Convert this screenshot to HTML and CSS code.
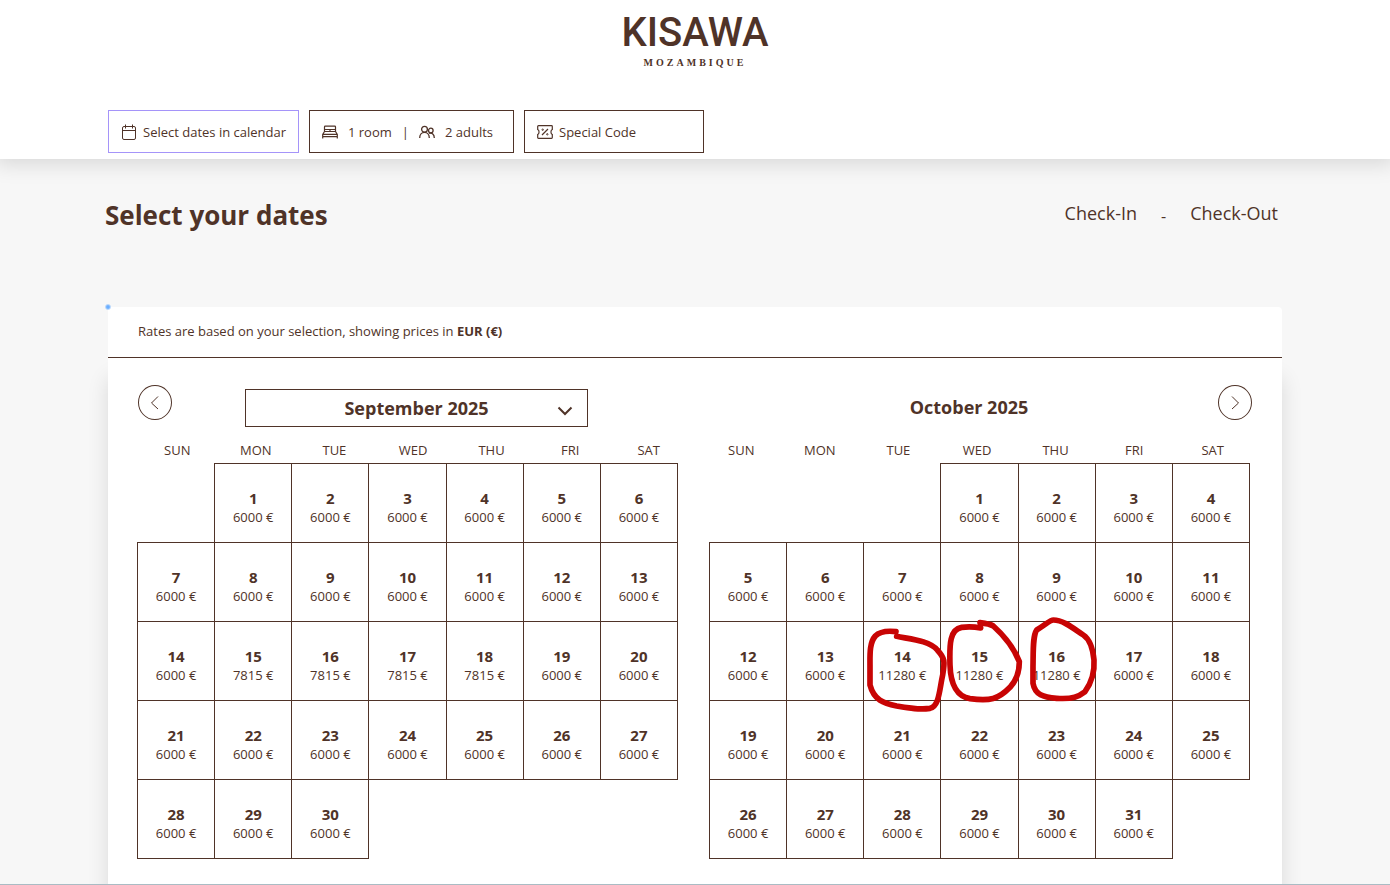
FILE: index.html
```html
<!DOCTYPE html>
<html lang="en">
<head>
<meta charset="utf-8">
<meta name="viewport" content="width=device-width, initial-scale=1">
<title>Kisawa Mozambique – Select your dates</title>
<link rel="stylesheet" href="styles.css">
</head>
<body>
<header class="site-header">
  <a class="logo" href="#"><span class="logo-name">KISAWA</span><span class="logo-place">MOZAMBIQUE</span></a>
  <div class="search-bar">
    <button type="button" class="field field-dates">
      <svg class="icon" width="16" height="16" viewBox="0 0 16 16"><rect x="1.5" y="2.5" width="13" height="13" rx="1.5"/><path d="M1.5 6.5h13M4.5 .5v4M11.5 .5v4"/></svg>
      <span>Select dates in calendar</span>
    </button>
    <button type="button" class="field field-guests">
      <svg class="icon" width="16" height="14" viewBox="0 0 16 14"><path d="M2.500 7V2q0-.8.8-.8h9.400q.8 0 .8.800V7M.7 13.500V9.500L2.500 6.500h11l1.800 3v4M.7 9.400h14.600M.7 11.600h14.600M2.500 4.500h11M8 4.500v2" stroke-width="1.200"/></svg>
      <span>1 room</span>
      <span class="divider">|</span>
      <svg class="icon" width="16" height="14" viewBox="0 0 16 14"><g stroke-width="1.300"><circle cx="5.500" cy="4.300" r="2.900"/><path d="M.7 13c0-3.300 2-5.600 4.800-5.600S10.300 9.700 10.300 13"/><circle cx="11.800" cy="5.500" r="2.300"/><path d="M10.200 8.500c2.800-1 5.100.7 5.100 4.500"/></g></svg>
      <span>2 adults</span>
    </button>
    <button type="button" class="field field-code">
      <svg class="icon" width="16" height="14" viewBox="0 0 16 14"><path d="M1.500 .7h13q.8 0 .8.800V4.500c-1.800.6-1.800 4.400 0 5V12.500q0 .8-.8.800h-13q-.8 0-.8-.8V9.500c1.800-.6 1.800-4.400 0-5V1.500q0-.8.8-.8zM5 10l6-6" stroke-width="1.200"/><circle cx="5.700" cy="4.700" r=".7"/><circle cx="10.300" cy="9.300" r=".7"/></svg>
      <span>Special Code</span>
    </button>
  </div>
</header>

<main class="page">
  <div class="title-row">
    <h1>Select your dates</h1>
    <div class="stay"><span>Check-In</span><span class="stay-dash">-</span><span>Check-Out</span></div>
  </div>

  <section class="card">
    <p class="rates-note">Rates are based on your selection, showing prices in <strong>EUR (€)</strong></p>
    <div class="months">
      <section class="month month-first">
        <div class="month-head">
          <button type="button" class="nav" aria-label="Previous month"><svg width="34" height="35" viewBox="0 0 34 35"><path d="M20 11.500l-6.500 6.500 6.500 6"/></svg></button>
          <div class="month-select">
            <select aria-label="Month"><option>September 2025</option><option>October 2025</option></select>
            <svg class="chevron" width="16" height="10" viewBox="0 0 16 10"><path d="M1.500 1.500L8 8l6.500-6.500"/></svg>
          </div>
        </div>
        <table class="calendar" data-start="1" data-days="30" data-high="15,16,17,18" data-price="7815" aria-label="September 2025"></table>
      </section>
      <section class="month month-second">
        <div class="month-head">
          <h2>October 2025</h2>
          <button type="button" class="nav" aria-label="Next month"><svg width="34" height="35" viewBox="0 0 34 35"><path d="M14 11.500l6.500 6.500-6.500 6"/></svg></button>
        </div>
        <div class="marked">
          <table class="calendar" data-start="3" data-days="31" data-high="14,15,16" data-price="11280" aria-label="October 2025"></table>
          <svg class="marks" viewBox="0 0 1623 1188" preserveAspectRatio="none" aria-hidden="true">
            <g transform="translate(423 411)">
              <path d="M138 95C112 92 90 94 76 108C58 128 60 165 60 195V255C72 300 100 310 140 318C180 325 210 330 240 325C268 318 268 270 278 225C285 185 285 175 262 150C238 122 185 118 140 109"/>
              <path d="M392 84C372 80 352 80 335 82C300 88 298 130 300 195C302 260 325 290 360 296C420 304 445 298 480 262C500 240 508 215 508 185C490 140 460 105 430 78C420 72 405 70 390 68"/>
              <path d="M610 60C600 60 590 72 560 90C548 108 550 150 549 200V250C555 285 580 292 620 295C670 298 685 290 705 275C730 240 734 210 732 180C728 140 715 115 700 105C670 85 640 60 610 60Z"/>
            </g>
          </svg>
        </div>
      </section>
    </div>
    <span class="focus-dot"></span>
  </section>
</main>
<script src="calendar.js"></script>
</body>
</html>
```
FILE: styles.css
```css
* { box-sizing: border-box; }

:root {
  --brown: #4f3328;
  --page: #f7f7f7;
}

body {
  margin: 0;
  min-height: 100vh;
  display: flex;
  flex-direction: column;
  background: var(--page);
  color: var(--brown);
  font-family: "Open Sans", "Noto Sans", sans-serif;
  font-size: 13px;
}

button, select { font: inherit; color: inherit; cursor: pointer; }

svg { flex: none; fill: none; stroke: var(--brown); }

.site-header {
  position: relative;
  padding: 10px 108px 6px;
  background: #fff;
  box-shadow: 0 0 20px 5px rgba(0, 0, 0, .13);
}

.logo {
  display: flex;
  flex-direction: column;
  align-items: center;
  height: 100px;
  color: var(--brown);
  text-decoration: none;
}

.logo-name { font: 500 40px/45px "Roboto", sans-serif; }

.logo-place {
  font: bold 10px/16px "Liberation Serif", serif;
  letter-spacing: 3px;
}

.search-bar { display: flex; gap: 10px; }

.field {
  display: flex;
  align-items: center;
  height: 43px;
  padding: 0 12px;
  border: 1px solid var(--brown);
  background: #fff;
  white-space: nowrap;
}

.field-dates { width: 191px; gap: 6px; border-color: #a594f9; }
.field-guests { width: 205px; gap: 10px; }
.field-code { width: 180px; gap: 6px; }

.page {
  flex: 1;
  display: flex;
  flex-direction: column;
  padding: 0 108px;
  border-bottom: 1px solid #a9bcc4;
}

.title-row {
  display: flex;
  justify-content: space-between;
  align-items: center;
  margin: 38px 4px 73px -3px;
}

h1 { margin: 0; font-size: 26px; line-height: 37px; }

.stay { display: flex; gap: 24px; font-size: 18px; line-height: 30px; }
.stay-dash { font-size: 16px; line-height: 36px; }

.card { position: relative; flex: 1; display: flex; flex-direction: column; }

.rates-note {
  margin: 0;
  padding: 15px 30px 16px;
  line-height: 19px;
  background: #fff;
  border-bottom: 1px solid var(--brown);
  border-radius: 4px 4px 0 0;
}

.focus-dot {
  position: absolute;
  top: -3px;
  left: -3px;
  width: 6px;
  height: 6px;
  background: radial-gradient(#6aaeff 30%, transparent 80%);
}

.months {
  flex: 1;
  display: flex;
  gap: 14px;
  padding: 27px 30px 25px;
  background: #fff;
  box-shadow: 0 20px 20px rgba(0, 0, 0, .12);
  clip-path: inset(0 -40px 0 -40px);
}

.month { flex: 1; }

.month-head { display: flex; align-items: flex-start; height: 42px; }

.nav {
  width: 34px;
  height: 35px;
  padding: 0;
  border: 1px solid var(--brown);
  border-radius: 50%;
  background: #fff;
}

.nav svg { display: block; margin: -1px; }

.month-select { position: relative; flex: 1; margin: 4px 100px 0 73px; }

.month-select select {
  width: 100%;
  height: 38px;
  appearance: none;
  border: 1px solid var(--brown);
  border-radius: 0;
  background: #fff;
  font-size: 18px;
  font-weight: bold;
  text-align-last: center;
}

.chevron { position: absolute; right: 15px; top: 17px; stroke-width: 2; pointer-events: none; }

h2 {
  flex: 1;
  margin: 4px 0 0;
  padding-left: 18px;
  font-size: 18px;
  line-height: 36px;
  text-align: center;
}

.calendar, .calendar thead, .calendar tbody { display: block; }

.calendar tr { display: grid; grid-template-columns: repeat(7, 1fr); }

.calendar th {
  padding: 14px 0 4px;
  font-weight: normal;
  line-height: 18px;
  text-align: center;
}

.calendar tbody { padding: 0 11px 1px 0; margin-left: -1px; }

.calendar td { height: 79px; padding: 0; }

.calendar td.day {
  height: 80px;
  margin: 0 -1px -1px 0;
  border: 1px solid var(--brown);
}

.day button {
  display: flex;
  flex-direction: column;
  align-items: center;
  justify-content: center;
  width: 100%;
  height: 100%;
  padding: 10px 0 0;
  border: 0;
  background: none;
  line-height: 19px;
}

.day strong { font-size: 15px; }

.marked { position: relative; }

.marked .calendar tbody { margin-left: 7px; padding-right: 3px; }

.marks {
  position: absolute;
  top: 36px;
  left: 7px;
  width: calc(100% - 9px);
  height: 396px;
  stroke: #c80404;
  stroke-width: 17;
  stroke-linecap: round;
  stroke-linejoin: round;
  pointer-events: none;
}
```
FILE: calendar.js
```js
const weekdays = ["SUN", "MON", "TUE", "WED", "THU", "FRI", "SAT"];

document.querySelectorAll(".calendar").forEach((table) => {
  const start = Number(table.dataset.start);
  const days = Number(table.dataset.days);
  const high = table.dataset.high.split(",").map(Number);

  const head = table.createTHead().insertRow();
  weekdays.forEach((name) => {
    const th = document.createElement("th");
    th.scope = "col";
    th.textContent = name;
    head.append(th);
  });

  const body = table.createTBody();
  for (let first = 1 - start; first <= days; first += 7) {
    const row = body.insertRow();
    for (let day = first; day < first + 7; day++) {
      const cell = row.insertCell();
      if (day < 1 || day > days) continue;
      const price = high.includes(day) ? table.dataset.price : "6000";
      cell.className = "day";
      cell.innerHTML = `<button type="button"><strong>${day}</strong><span>${price} €</span></button>`;
    }
  }
});
```
